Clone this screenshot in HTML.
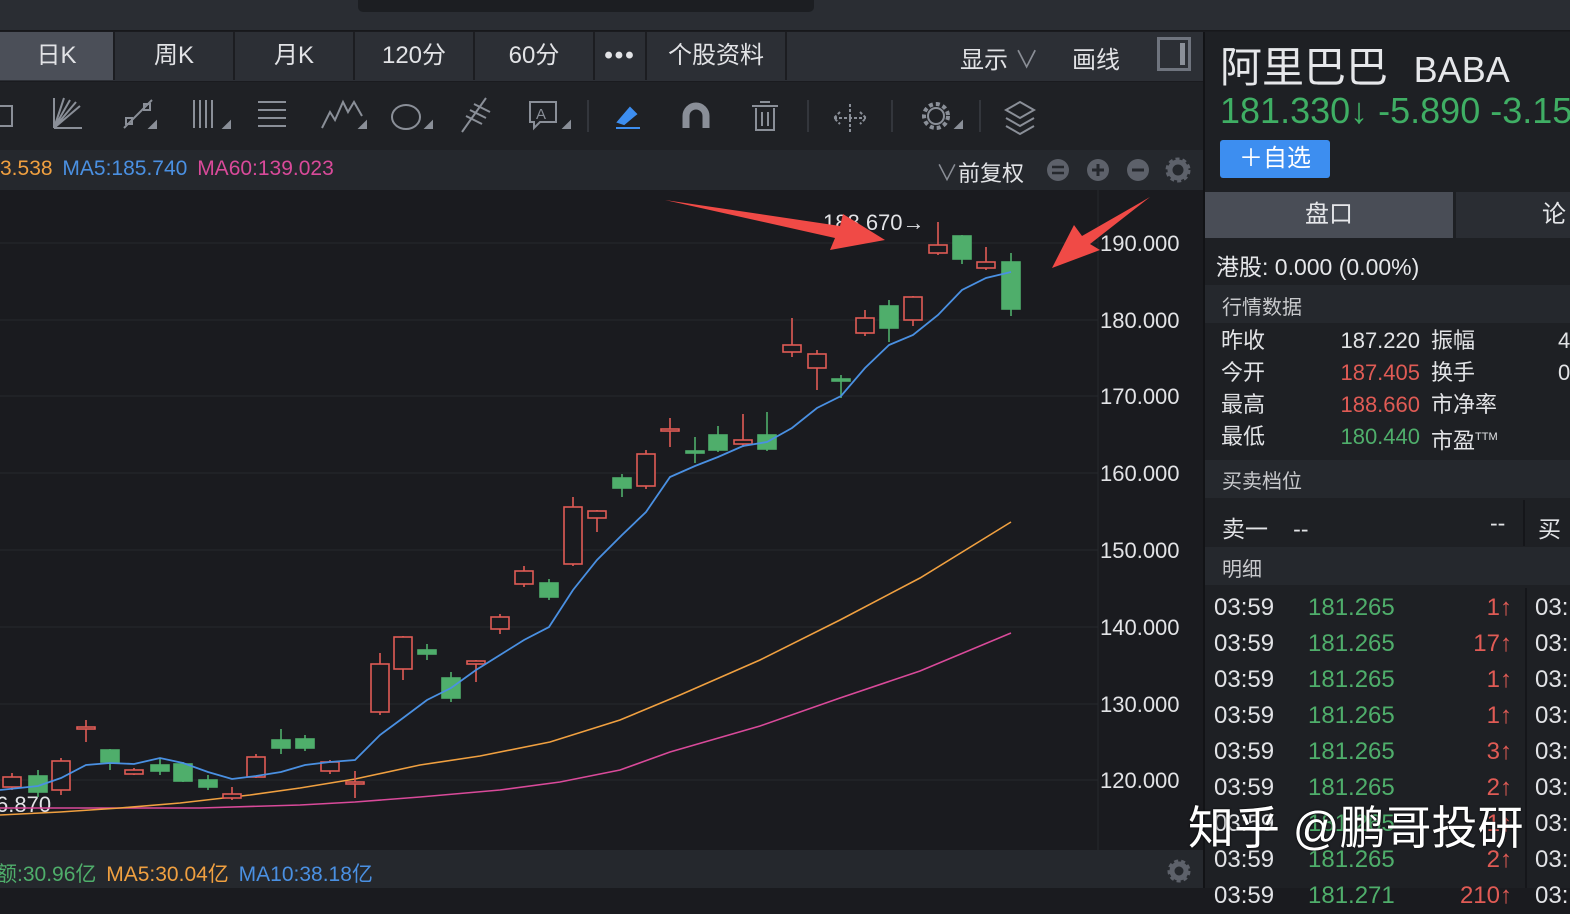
<!DOCTYPE html>
<html><head><meta charset="utf-8"><style>
*{margin:0;padding:0;box-sizing:border-box}
body{width:1570px;height:888px;overflow:hidden;background:#1a1b1f;font-family:"Liberation Sans","Noto Sans CJK SC",sans-serif;position:relative;color:#d8d9dc}
.a{position:absolute}
.tab{position:absolute;top:32px;height:48px;line-height:48px;text-align:center;font-size:24px;color:#e2e3e6;background:#2c2f35;border-right:2px solid #1c1d21}
.r{position:absolute;font-size:22px;white-space:nowrap}
.g{color:#4fae6b}.rd{color:#e05b55}
</style></head><body>
<div class="a" style="left:0;top:0;width:1570px;height:31px;background:#2a2d33;border-bottom:1px solid #17181b"></div>
<div class="a" style="left:358px;top:0;width:456px;height:12px;background:#1c1e22;border-radius:0 0 5px 5px"></div>
<div class="a" style="left:0;top:32px;width:1203px;height:49px;background:#2c2f35"></div>
<div class="tab" style="left:0;width:115px;background:#4b4f58">日K</div>
<div class="tab" style="left:115px;width:120px">周K</div>
<div class="tab" style="left:235px;width:120px">月K</div>
<div class="tab" style="left:355px;width:120px">120分</div>
<div class="tab" style="left:475px;width:120px">60分</div>
<div class="tab" style="left:595px;width:52px;font-weight:bold;letter-spacing:2px">•••</div>
<div class="tab" style="left:647px;width:140px">个股资料</div>
<div class="r" style="left:960px;top:40px;font-size:24px;color:#e2e3e6">显示 <span style="color:#8a8e96">∨</span></div>
<div class="r" style="left:1072px;top:40px;font-size:24px;color:#e2e3e6">画线</div>
<div class="a" style="left:1157px;top:37px;width:34px;height:34px;border:3px solid #6f747e"><div class="a" style="right:3px;top:3px;width:5px;height:22px;background:#8b9099"></div></div>
<div class="a" style="left:0;top:82px;width:1203px;height:68px;background:#1f2125"></div>
<svg class="a" style="left:0;top:82px" width="1203" height="68" fill="none" stroke="#8a8f98" stroke-width="2">
<path d="M0 24h12v20H0"/>
<path d="M54 46h28M54 46l26-22M54 46l22-26M54 46l16-28M54 46l10-30M54 46V16"/>
<path d="M124 46l28-28M126 36h6v6h-6zM144 22h6v6h-6z"/><path d="M150 46l6-6v6z" fill="#8a8f98"/>
<path d="M194 18v28M200 18v28M206 18v28M212 18v28"/><path d="M224 46l6-6v6z" fill="#8a8f98"/>
<path d="M258 20h28M258 28h28M258 36h28M258 44h28"/>
<path d="M322 46l8-16 5 8 8-18 5 10 6-10 8 14"/><path d="M360 46l6-6v6z" fill="#8a8f98"/>
<ellipse cx="406" cy="35" rx="14" ry="12"/><path d="M426 46l6-6v6z" fill="#8a8f98"/>
<path d="M462 50l24-34M470 28l16 8M474 22l16 8M466 34l16 8"/>
<path d="M530 20h26v20h-16l-6 6v-6h-4z"/><text x="536" y="37" fill="#8a8f98" stroke="none" font-size="15" font-family="Liberation Sans">A</text><path d="M564 46l6-6v6z" fill="#8a8f98"/>
<path d="M588 18v32" stroke="#33363c"/>
<path d="M618 40l12-14 6 6-12 10z" fill="#3d8ef0" stroke="#3d8ef0"/><path d="M616 46h24" stroke="#3d8ef0"/>
<path d="M686 46V34a10 10 0 0 1 20 0v12" stroke-width="7"/>
<path d="M752 24h26M760 20h10M756 26v22h18V26M762 30v14M768 30v14"/>
<path d="M808 18v32M892 18v32M980 18v32" stroke="#33363c"/>
<path d="M850 22v28M834 36h32M840 30l-6 6 6 6M860 30l6 6-6 6" stroke-dasharray="3 2"/>
<circle cx="936" cy="34" r="8"/><circle cx="936" cy="34" r="12" stroke-dasharray="4 3" stroke-width="4"/><path d="M956 46l6-6v6z" fill="#8a8f98"/>
<path d="M1006 28l14-8 14 8-14 8zM1006 36l14 8 14-8M1006 44l14 8 14-8"/>
</svg>
<div class="a" style="left:0;top:150px;width:1203px;height:40px;background:#25282d"></div>
<div class="r" style="left:0;top:157px;font-size:21px"><span style="color:#f0a040">3.538</span> <span style="color:#4a90e2;margin-left:4px">MA5:185.740</span> <span style="color:#d94a9a;margin-left:4px">MA60:139.023</span></div>
<div class="r" style="left:936px;top:156px;font-size:22px;color:#e2e3e6"><span style="color:#8a8e96">∨</span>前复权</div>
<svg class="a" style="left:1044px;top:156px" width="150" height="28">
<circle cx="14" cy="14" r="11" fill="#5d616a"/><path d="M8 11h12M8 17h12" stroke="#25282d" stroke-width="2.5"/>
<circle cx="54" cy="14" r="11" fill="#5d616a"/><path d="M48 14h12M54 8v12" stroke="#25282d" stroke-width="3"/>
<circle cx="94" cy="14" r="11" fill="#5d616a"/><path d="M88 14h12" stroke="#25282d" stroke-width="3"/>
<circle cx="134" cy="14" r="8" fill="none" stroke="#5d616a" stroke-width="5"/><circle cx="134" cy="14" r="11" fill="none" stroke="#5d616a" stroke-width="3" stroke-dasharray="4 3"/>
</svg>
<svg class="a" style="left:0;top:0" width="1203" height="888">
<g stroke="#26282d" stroke-width="1">
<path d="M0 243H1098M0 320H1098M0 396H1098M0 473H1098M0 550H1098M0 627H1098M0 704H1098M0 780H1098"/>
<path d="M1098 190V850"/>
</g>
<g font-size="22" fill="#e2e3e6" font-family="Liberation Sans">
<text x="1100" y="251">190.000</text><text x="1100" y="328">180.000</text><text x="1100" y="404">170.000</text><text x="1100" y="481">160.000</text><text x="1100" y="558">150.000</text><text x="1100" y="635">140.000</text><text x="1100" y="712">130.000</text><text x="1100" y="788">120.000</text>
<text x="823" y="230">188.670→</text>
<text x="-4" y="812">6.870</text>
</g>
<polyline fill="none" stroke="#d94a9a" stroke-width="1.6" points="0,808 100,808 200,808 300,805 355,802 420,797 500,790 560,782 620,770 670,752 760,726 840,698 920,671 1011,633"/>
<polyline fill="none" stroke="#f0a040" stroke-width="1.6" points="0,815 60,812 120,808 180,803 250,795 300,788 355,779 420,765 480,756 550,742 620,720 680,695 760,660 840,620 920,578 1011,522"/>
<g id="c" stroke-width="1.6"></g>
<polyline fill="none" stroke="#4a90e2" stroke-width="1.8" points="0,790 38,786 61,778 86,765 110,763 134,764 160,758 183,763 208,772 232,779 256,776 281,772 305,765 330,762 355,760 380,735 403,718 427,700 451,688 476,670 500,655 524,640 549,627 573,590 597,560 622,535 646,512 670,477 695,466 718,457 743,446 767,442 792,428 817,408 841,396 865,368 889,345 913,335 938,315 962,290 986,278 1011,272"/>
<polygon fill="#f04a46" points="665,200 840,226 843,214 885,240 830,250 835,238"/>
<polygon fill="#f04a46" points="1150,197 1090,244 1100,250 1052,268 1074,225 1082,236"/>
</svg>
<script>
var d=[[12,'r',777,787,773,790],[38,'g',776,792,770,797],[61,'r',761,790,758,795],[86,'r',727,729,720,742],[110,'g',750,762,749,770],[134,'r',770,774,768,775],[160,'g',765,771,758,775],[183,'g',764,781,762,782],[208,'g',780,787,775,790],[232,'r',794,798,787,800],[256,'r',757,777,754,778],[281,'g',740,748,729,754],[305,'g',739,748,735,751],[330,'r',762,771,760,774],[355,'r',782,784,771,798],[380,'r',664,712,653,715],[403,'r',637,669,636,680],[427,'g',650,654,644,660],[451,'g',678,698,672,702],[476,'r',661,664,660,682],[500,'r',617,629,614,634],[524,'r',571,584,566,587],[549,'g',583,597,579,600],[573,'r',507,564,497,566],[597,'r',511,518,510,532],[622,'g',478,488,474,497],[646,'r',454,486,450,489],[670,'r',429,431,418,447],[695,'g',451,453,437,463],[718,'g',435,450,426,452],[743,'r',440,444,414,447],[767,'g',435,449,412,451],[792,'r',345,352,318,357],[817,'r',354,368,350,390],[841,'g',379,381,375,398],[865,'r',318,333,310,336],[889,'g',306,328,300,342],[913,'r',297,320,296,326],[938,'r',245,253,222,255],[962,'g',236,259,235,264],[986,'r',262,268,247,270],[1011,'g',262,309,253,316]];
var s='';d.forEach(function(c){var col=c[1]=='r'?'#e05b55':'#4fae6b';s+='<line x1="'+c[0]+'" x2="'+c[0]+'" y1="'+c[4]+'" y2="'+c[5]+'" stroke="'+col+'"/>';s+='<rect x="'+(c[0]-9)+'" y="'+c[2]+'" width="18" height="'+Math.max(c[3]-c[2],2)+'" fill="'+(c[1]=='r'?'#1a1b1f':col)+'" stroke="'+col+'"/>';});
document.getElementById('c').innerHTML=s;
</script>
<div class="a" style="left:0;top:850px;width:1203px;height:38px;background:#25282d"></div>
<div class="r" style="left:-4px;top:858px;font-size:21px"><span class="g">额:30.96亿</span> <span style="color:#f0a040;margin-left:4px">MA5:30.04亿</span> <span style="color:#4a90e2;margin-left:4px">MA10:38.18亿</span></div>
<svg class="a" style="left:1166px;top:858px" width="26" height="26"><circle cx="13" cy="13" r="7" fill="none" stroke="#5d616a" stroke-width="5"/><circle cx="13" cy="13" r="10" fill="none" stroke="#5d616a" stroke-width="3" stroke-dasharray="4 3"/></svg>
<div class="a" style="left:1203px;top:32px;width:367px;height:856px;background:#1e2024;border-left:2px solid #121316"></div>
<div class="r" style="left:1220px;top:34px;font-size:42px;color:#e6e7ea">阿里巴巴 <span style="font-size:36px;margin-left:14px">BABA</span></div>
<div class="r g" style="left:1220px;top:90px;font-size:36px;color:#3fae64">181.330↓ -5.890 -3.15%</div>
<div class="a" style="left:1220px;top:140px;width:110px;height:38px;background:#3d8ef0;border-radius:3px;color:#fff;font-size:24px;line-height:38px;text-align:center">＋自选</div>
<div class="a" style="left:1205px;top:192px;width:248px;height:46px;background:#494d56;color:#e6e7ea;font-size:24px;line-height:46px;text-align:center">盘口</div>
<div class="a" style="left:1456px;top:192px;width:114px;height:46px;background:#2a2d33;color:#e6e7ea;font-size:24px;line-height:46px;padding-left:86px">论</div>
<div class="r" style="left:1216px;top:248px;font-size:23px;color:#e6e7ea">港股: 0.000 (0.00%)</div>
<div class="a" style="left:1205px;top:285px;width:365px;height:38px;background:#25282d"></div>
<div class="r" style="left:1222px;top:291px;font-size:20px;color:#c8c9cc">行情数据</div>
<div class="r" style="left:1221px;top:325px;font-size:22px;line-height:32px;color:#e2e3e6">昨收<br>今开<br>最高<br>最低</div>
<div class="r" style="left:1300px;top:325px;width:120px;text-align:right;font-size:22px;line-height:32px"><span style="color:#e2e3e6">187.220</span><br><span class="rd">187.405</span><br><span class="rd">188.660</span><br><span class="g">180.440</span></div>
<div class="r" style="left:1431px;top:325px;font-size:22px;line-height:32px;color:#e2e3e6">振幅<br>换手<br>市净率<br>市盈<sup style="font-size:11px">TTM</sup></div>
<div class="r" style="left:1558px;top:325px;font-size:22px;line-height:32px;color:#e2e3e6">4<br>0</div>
<div class="a" style="left:1205px;top:460px;width:365px;height:38px;background:#25282d"></div>
<div class="r" style="left:1222px;top:465px;font-size:20px;color:#c8c9cc">买卖档位</div>
<div class="r" style="left:1222px;top:510px;font-size:23px;color:#e2e3e6">卖一 &nbsp; <span style="margin-left:6px">--</span></div>
<div class="r" style="left:1490px;top:510px;font-size:23px;color:#e2e3e6">--</div>
<div class="a" style="left:1523px;top:500px;width:2px;height:46px;background:#15161a"></div>
<div class="r" style="left:1538px;top:510px;font-size:23px;color:#e2e3e6">买</div>
<div class="a" style="left:1205px;top:547px;width:365px;height:38px;background:#25282d"></div>
<div class="r" style="left:1222px;top:553px;font-size:20px;color:#c8c9cc">明细</div>
<div class="a" style="left:1525px;top:588px;width:2px;height:300px;background:#15161a"></div>
<div class="r" style="left:1214px;top:590px;font-size:24px;line-height:36px;color:#e2e3e6">03:59<br>03:59<br>03:59<br>03:59<br>03:59<br>03:59<br>03:59<br>03:59<br>03:59</div>
<div class="r g" style="left:1308px;top:590px;font-size:24px;line-height:36px">181.265<br>181.265<br>181.265<br>181.265<br>181.265<br>181.265<br>181.265<br>181.265<br>181.271</div>
<div class="r rd" style="left:1440px;top:590px;width:72px;text-align:right;font-size:24px;line-height:36px">1↑<br>17↑<br>1↑<br>1↑<br>3↑<br>2↑<br>1↑<br>2↑<br>210↑</div>
<div class="r" style="left:1535px;top:590px;font-size:24px;line-height:36px;color:#e2e3e6">03:<br>03:<br>03:<br>03:<br>03:<br>03:<br>03:<br>03:<br>03:</div>
<div class="r" style="left:1188px;top:792px;font-size:46px;color:#fff;text-shadow:0 0 2px #000">知乎 @鹏哥投研</div>
</body></html>
